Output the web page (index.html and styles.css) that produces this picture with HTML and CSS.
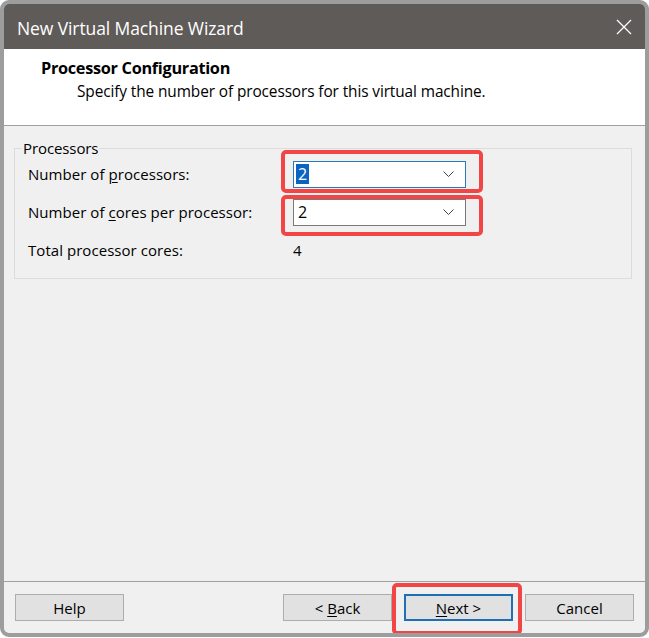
FILE: index.html
```html
<!DOCTYPE html>
<html>
<head>
<meta charset="utf-8">
<link rel="stylesheet" href="styles.css">
</head>
<body>
<div class="window">
  <div class="titlebar">
    <span class="title">New Virtual Machine Wizard</span>
    <svg class="close" width="16" height="16" viewBox="0 0 16 16"><path d="M1 1 L15 15 M15 1 L1 15" stroke="#ffffff" stroke-width="1.3" fill="none"/></svg>
  </div>
  <div class="header">
    <div class="h-title">Processor Configuration</div>
    <div class="h-sub">Specify the number of processors for this virtual machine.</div>
  </div>
  <div class="body">
    <fieldset class="group">
      <legend>Processors</legend>
      <div class="rows">
        <div class="row">
          <span class="label">Number of <u>p</u>rocessors:</span>
          <div class="combo focused"><span class="sel">2</span><svg class="chev" width="11" height="6" viewBox="0 0 11 6"><path d="M0.5 0.5 L5.5 5.5 L10.5 0.5" stroke="#444" stroke-width="1" fill="none"/></svg></div>
        </div>
        <div class="row">
          <span class="label">Number of <u>c</u>ores per processor:</span>
          <div class="combo"><span class="val">2</span><svg class="chev" width="11" height="6" viewBox="0 0 11 6"><path d="M0.5 0.5 L5.5 5.5 L10.5 0.5" stroke="#444" stroke-width="1" fill="none"/></svg></div>
        </div>
        <div class="row">
          <span class="label">Total processor cores:</span>
          <span class="total">4</span>
        </div>
      </div>
    </fieldset>
  </div>
  <div class="footer">
    <button class="btn">Help</button>
    <div class="spacer"></div>
    <button class="btn">&lt; <u>B</u>ack</button>
    <button class="btn default"><u>N</u>ext &gt;</button>
    <button class="btn">Cancel</button>
  </div>
  <div class="mark mark1"></div>
  <div class="mark mark2"></div>
  <div class="mark mark3"></div>
</div>
</body>
</html>
```
FILE: styles.css
```css
* { box-sizing: border-box; }
html, body { margin: 0; padding: 0; background: #ffffff; }
body { width: 649px; height: 638px; overflow: hidden; font-family: "Open Sans", "Noto Sans", sans-serif; }
.window {
  position: relative;
  width: 649px;
  height: 637px;
  border: 4px solid #9d9d9d;
  border-radius: 9px;
  background: #f0f0f0;
  display: flex;
  flex-direction: column;
  overflow: hidden;
}
.titlebar {
  height: 45px;
  background: #5f5b58;
  display: flex;
  align-items: center;
  justify-content: space-between;
  padding: 2px 12px 0 13px;
  flex: none;
}
.title { color: #ffffff; font-size: 17.5px; letter-spacing: -0.1px; }
.close { margin-right: 1px; margin-top: -2px; }
.header {
  height: 77px;
  background: #ffffff;
  border-bottom: 1px solid #a0a0a0;
  padding: 8px 0 0 37px;
  flex: none;
}
.h-title { font-weight: bold; font-size: 16.3px; color: #000; line-height: 23px; letter-spacing: -0.3px; }
.h-sub { font-size: 15.4px; color: #000; line-height: 23px; padding-left: 36px; letter-spacing: -0.1px; }
.body { flex: 1; padding: 12px 13px 0 10px; }
.group {
  margin: 0;
  border: 1px solid #dcdcdc;
  padding: 0 0 12px 13px;
  height: 141px;
}
.group legend { font-size: 15px; padding: 0 1px; margin-left: -6px; color: #000; line-height: 20px; letter-spacing: -0.1px; }
.rows { margin-top: -3px; display: flex; flex-direction: column; }
.row { display: flex; align-items: center; height: 38px; }
.label { width: 265px; font-size: 15px; color: #000; letter-spacing: 0.05px; }
.label u, .btn u { text-decoration: underline; text-underline-offset: 2px; }
.combo {
  width: 173px;
  height: 27px;
  background: #ffffff;
  border: 1px solid #7a7a7a;
  display: flex;
  align-items: center;
  justify-content: space-between;
  padding: 0 11px 0 2px;
  font-size: 16px;
}
.combo.focused { border-color: #2b79b8; }
.sel { background: #0a64c4; color: #fff; padding: 0 2px; line-height: 20px; }
.val { padding-left: 2px; }
.total { font-size: 15px; }
.footer {
  flex: none;
  height: 52px;
  border-top: 1px solid #a0a0a0;
  display: flex;
  align-items: center;
  padding: 0 11px 0 11px;
  gap: 12px;
}
.spacer { flex: 1; }
.btn {
  width: 109px;
  height: 27px;
  background: #e1e1e1;
  border: 1px solid #adadad;
  font-family: inherit;
  font-size: 15px;
  color: #000;
  padding: 0;
}
.btn.default { border: 2px solid #1e6fb5; }
.mark {
  position: absolute;
  border: 4px solid #f24646;
  border-radius: 5px;
}
.mark1 { left: 277px; top: 146px; width: 202px; height: 43px; }
.mark2 { left: 277px; top: 191px; width: 202px; height: 41px; }
.mark3 { left: 388px; top: 579px; width: 130px; height: 52px; }
```
